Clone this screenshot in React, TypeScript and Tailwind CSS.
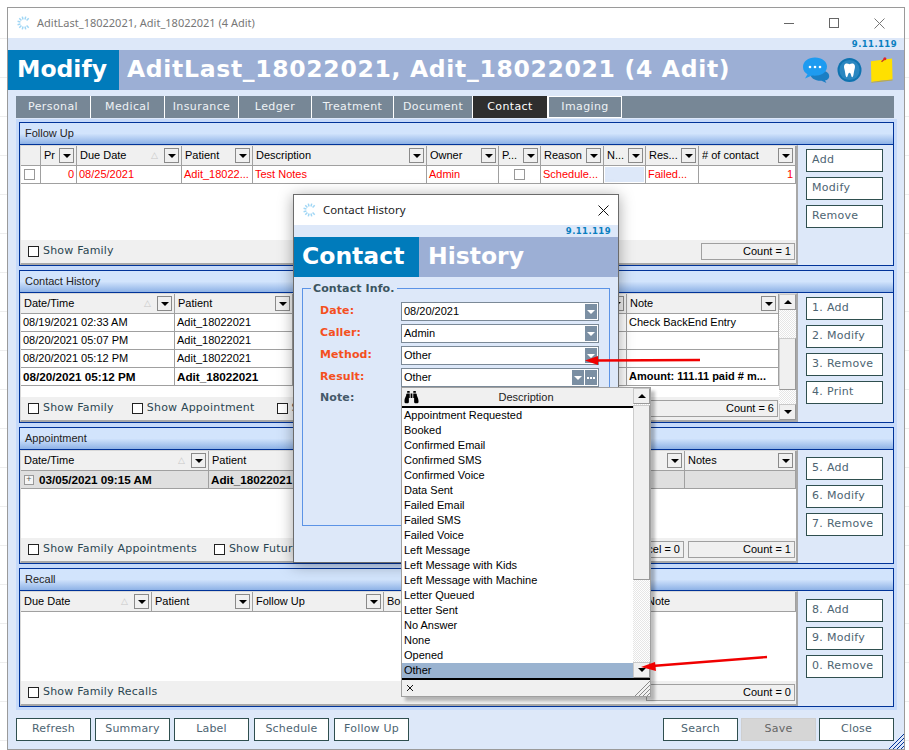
import { FaBinoculars } from "react-icons/fa";

const sans = "font-['Liberation_Sans',Arial,sans-serif]";
const deja = "font-['DejaVu_Sans',Verdana,sans-serif]";

interface Col {
  label: string;
  w: number;
  sort?: boolean;
  filter?: boolean;
}

function Spinner() {
  return (
    <svg width="14" height="14" viewBox="0 0 16 16" className="shrink-0">
      {Array.from({ length: 10 }).map((_, i) => {
        const a = (i * 30 + 45) * (Math.PI / 180);
        return (
          <line
            key={i}
            x1={8 + Math.cos(a) * 4.2}
            y1={8 + Math.sin(a) * 4.2}
            x2={8 + Math.cos(a) * 7.6}
            y2={8 + Math.sin(a) * 7.6}
            stroke="#a0d6f5"
            strokeWidth="1.7"
          />
        );
      })}
    </svg>
  );
}

function FilterBtn() {
  return (
    <span className="w-[15px] h-[15px] border border-[#8a8a8a] bg-[#f0f0f0] flex items-center justify-center shrink-0">
      <span className="w-0 h-0 border-x-[4px] border-x-transparent border-t-[4px] border-t-black" />
    </span>
  );
}

function HeaderCell({ col, h = 19 }: { col: Col; h?: number }) {
  return (
    <div
      style={{ width: col.w, height: h }}
      className="shrink-0 flex items-center pl-[3px] pr-[2px] border-r border-[#a0a0a0] overflow-hidden"
    >
      <span className="flex-1 whitespace-nowrap overflow-hidden">{col.label}</span>
      {col.sort && <span className="text-[9px] text-[#c8c8c8] mr-[6px]">△</span>}
      {col.filter !== false && <FilterBtn />}
    </div>
  );
}

function GridHeader({ cols }: { cols: Col[] }) {
  return (
    <div className="flex bg-[#f0f0f0] border-b border-[#a0a0a0] text-[11px] text-black shrink-0">
      {cols.map((c, i) => (
        <HeaderCell key={i} col={c} />
      ))}
    </div>
  );
}

function Cell({ w, children, right, bold }: { w: number; children?: React.ReactNode; right?: boolean; bold?: boolean }) {
  return (
    <div
      style={{ width: w }}
      className={`shrink-0 h-full flex items-center px-[2px] border-r border-[#a0a0a0] whitespace-nowrap overflow-hidden ${right ? "justify-end" : ""} ${bold ? "font-bold text-[11.7px]" : ""}`}
    >
      {children}
    </div>
  );
}

function Check({ label, className = "" }: { label: string; className?: string }) {
  return (
    <span className={`flex items-center gap-[4px] whitespace-nowrap ${deja} text-[11px] tracking-[0.2px] text-[#2b4652] ${className}`}>
      <span className="w-[11px] h-[11px] border border-[#222] bg-white shrink-0" />
      {label}
    </span>
  );
}

function CountBox({ text, w }: { text: string; w: number }) {
  return (
    <span
      style={{ width: w }}
      className={`h-[17px] border border-[#a0a0a0] bg-[#f0f0f0] flex items-center justify-end pr-[3px] text-[11px] text-black shrink-0 whitespace-nowrap overflow-hidden ${sans}`}
    >
      {text}
    </span>
  );
}

function SideBtn({ label }: { label: string }) {
  return (
    <button className={`w-[77px] h-[23px] border border-[#2f4f4f] bg-white text-left pl-[5px] ${deja} text-[11px] tracking-[0.3px] text-[#4d6472]`}>
      {label}
    </button>
  );
}

function Panel({
  title,
  height,
  buttons,
  btnTop,
  children,
}: {
  title: string;
  height: number;
  buttons: string[];
  btnTop: number;
  children: React.ReactNode;
}) {
  return (
    <section style={{ height }} className="border border-[#003399] bg-[#dde8f9] flex flex-col shrink-0">
      <div className={`h-[22px] shrink-0 border-b border-[#003399] bg-gradient-to-b from-[#d2e4fc] from-50% to-[#8eb2e6] flex items-center pl-[5px] text-[11px] text-[#222] ${sans}`}>
        {title}
      </div>
      <div className="flex-1 flex min-h-0">
        <div className={`w-[778px] flex flex-col bg-white border-t border-l border-[#d8d8d8] border-r-2 border-b-2 border-r-[#a8a8a8] border-b-[#a8a8a8] relative ${sans} text-[11px]`}>
          {children}
        </div>
        <div className="flex flex-col gap-[5px] pl-[8px]" style={{ paddingTop: btnTop }}>
          {buttons.map((b) => (
            <SideBtn key={b} label={b} />
          ))}
        </div>
      </div>
    </section>
  );
}

function GridFooter({ h = 23, children }: { h?: number; children: React.ReactNode }) {
  return (
    <div style={{ height: h }} className="shrink-0 bg-[#f0f0f0] flex items-center pl-[7px] pr-[1px]">
      {children}
    </div>
  );
}

function FollowUp() {
  const cols: Col[] = [
    { label: "", w: 20, filter: false },
    { label: "Pr", w: 36 },
    { label: "Due Date", w: 105, sort: true },
    { label: "Patient", w: 71 },
    { label: "Description", w: 174 },
    { label: "Owner", w: 72 },
    { label: "P...", w: 42 },
    { label: "Reason", w: 63 },
    { label: "N...", w: 42 },
    { label: "Res...", w: 53 },
    { label: "# of contact", w: 97 },
  ];
  return (
    <Panel title="Follow Up" height={144} buttons={["Add", "Modify", "Remove"]} btnTop={4}>
      <GridHeader cols={cols} />
      <div className="h-[18px] flex border-b border-[#a0a0a0] text-[#ff0000] shrink-0">
        <Cell w={20}>
          <span className="w-[11px] h-[11px] border border-[#999] bg-white ml-[1px]" />
        </Cell>
        <Cell w={36} right>0</Cell>
        <Cell w={105}>08/25/2021</Cell>
        <Cell w={71}>Adit_18022...</Cell>
        <Cell w={174}>Test Notes</Cell>
        <Cell w={72}>Admin</Cell>
        <div className="w-[42px] h-full flex items-center justify-center border-r border-[#a0a0a0]">
          <span className="w-[11px] h-[11px] border border-[#999] bg-white" />
        </div>
        <Cell w={63}>Schedule...</Cell>
        <div className="w-[42px] h-full border-r border-[#a0a0a0] p-[1px]">
          <div className="h-[15px] bg-[#dde8f9]" />
        </div>
        <Cell w={53}>Failed...</Cell>
        <Cell w={97} right>1</Cell>
      </div>
      <div className="flex-1" />
      <GridFooter>
        <Check label="Show Family" />
        <span className="flex-1" />
        <CountBox text="Count = 1" w={94} />
      </GridFooter>
    </Panel>
  );
}

const chCols: Col[] = [
  { label: "Date/Time", w: 154, sort: true },
  { label: "Patient", w: 118 },
  { label: "", w: 110 },
  { label: "", w: 110 },
  { label: "", w: 114 },
  { label: "Note", w: 152 },
];

function ChRow({ date, note, bold }: { date: string; note: React.ReactNode; bold?: boolean }) {
  return (
    <div className="h-[18px] flex border-b border-[#a0a0a0] text-black shrink-0">
      <Cell w={154} bold={bold}>{date}</Cell>
      <Cell w={118} bold={bold}>Adit_18022021</Cell>
      <Cell w={110} />
      <Cell w={110} />
      <Cell w={114} />
      <Cell w={152} bold={bold}>{note}</Cell>
    </div>
  );
}

function ScrollBtn({ up }: { up?: boolean }) {
  return (
    <div className="h-[16px] bg-[#f0f0f0] border border-[#c8c8c8] border-r-[#999] border-b-[#999] flex items-center justify-center shrink-0">
      <span className={`w-0 h-0 border-x-[4px] border-x-transparent ${up ? "border-b-[4px] border-b-black" : "border-t-[4px] border-t-black"}`} />
    </div>
  );
}

const trackDots = "bg-[repeating-conic-gradient(#e6e6e6_0%_25%,#ffffff_0%_50%)] bg-[length:2px_2px]";

function ContactHistory() {
  return (
    <Panel title="Contact History" height={153} buttons={["1. Add", "2. Modify", "3. Remove", "4. Print"]} btnTop={4}>
      <div className="flex flex-1 min-h-0">
        <div className="w-[758px] flex flex-col">
          <GridHeader cols={chCols} />
          <ChRow date="08/19/2021 02:33 AM" note="Check BackEnd Entry" />
          <ChRow date="08/20/2021 05:07 PM" note="" />
          <ChRow date="08/20/2021 05:12 PM" note="" />
          <ChRow date="08/20/2021 05:12 PM" note={<span className="text-[11px]">Amount: 111.11 paid # m...</span>} bold />
          <div className="flex-1" />
          <GridFooter>
            <Check label="Show Family" className="mr-[18px]" />
            <Check label="Show Appointment" className="mr-[22px]" />
            <Check label="Show Future" />
            <span className="flex-1" />
            <CountBox text="Count = 6" w={160} />
          </GridFooter>
        </div>
        <div className={`flex-1 flex flex-col ${trackDots}`}>
          <ScrollBtn up />
          <div className="h-[28px]" />
          <div className="h-[52px] bg-[#f0f0f0] border border-[#ccc] border-b-[#999] border-r-[#999]" />
          <div className="flex-1" />
          <ScrollBtn />
        </div>
      </div>
    </Panel>
  );
}

function Appointment() {
  const cols: Col[] = [
    { label: "Date/Time", w: 188, sort: true },
    { label: "Patient", w: 120 },
    { label: "", w: 120 },
    { label: "", w: 120 },
    { label: "", w: 116 },
    { label: "Notes", w: 111 },
  ];
  return (
    <Panel title="Appointment" height={137} buttons={["5. Add", "6. Modify", "7. Remove"]} btnTop={7}>
      <GridHeader cols={cols} />
      <div className="h-[18px] flex border-b border-[#a0a0a0] bg-[#dfdfdf] text-black shrink-0">
        <Cell w={188} bold>
          <span className="w-[10px] h-[10px] border border-[#999] bg-[#f5f5f5] mr-[5px] ml-[1px] flex items-center justify-center text-[9px] leading-none font-normal text-[#555] shrink-0">+</span>
          03/05/2021 09:15 AM
        </Cell>
        <Cell w={120} bold>Adit_18022021</Cell>
        <Cell w={120} />
        <Cell w={120} />
        <Cell w={116} />
        <Cell w={111} />
      </div>
      <div className="flex-1" />
      <GridFooter>
        <Check label="Show Family Appointments" className="mr-[17px]" />
        <Check label="Show Future" />
        <span className="flex-1" />
        <CountBox text="Cancel = 0" w={66} />
        <span className="w-[4px]" />
        <CountBox text="Count = 1" w={107} />
      </GridFooter>
    </Panel>
  );
}

function Recall() {
  const cols: Col[] = [
    { label: "Due Date", w: 131, sort: true },
    { label: "Patient", w: 101 },
    { label: "Follow Up", w: 131 },
    { label: "Booked", w: 130 },
    { label: "", w: 130 },
    { label: "Note", w: 152, filter: false },
  ];
  return (
    <Panel title="Recall" height={139} buttons={["8. Add", "9. Modify", "0. Remove"]} btnTop={8}>
      <GridHeader cols={cols} />
      <div className="flex-1" />
      <GridFooter>
        <Check label="Show Family Recalls" />
        <span className="flex-1" />
        <CountBox text="Count = 0" w={149} />
      </GridFooter>
    </Panel>
  );
}

function FootBtn({ label, disabled, className = "" }: { label: string; disabled?: boolean; className?: string }) {
  return (
    <button
      className={`w-[75px] h-[23px] border ${disabled ? "border-[#cfcfcf] bg-[#d6d6d6] text-[#666]" : "border-[#2f4f4f] bg-white text-[#4d6472]"} ${deja} text-[11px] tracking-[0.2px] ${className}`}
    >
      {label}
    </button>
  );
}

function Field({ value, more }: { value: string; more?: boolean }) {
  return (
    <div className={`h-[19px] w-[198px] border border-[#7b8997] bg-white flex items-center pl-[2px] pr-[1px] ${sans} text-[11px] text-black`}>
      <span className="flex-1">{value}</span>
      <span className="w-[12px] h-[15px] bg-[#7b8fa3] flex items-center justify-center">
        <span className="w-0 h-0 border-x-[4px] border-x-transparent border-t-[4px] border-t-white" />
      </span>
      {more && (
        <span className="w-[12px] h-[15px] bg-[#7b8fa3] ml-[1px] flex items-center justify-center gap-[1px]">
          <span className="w-[2px] h-[2px] bg-white" />
          <span className="w-[2px] h-[2px] bg-white" />
          <span className="w-[2px] h-[2px] bg-white" />
        </span>
      )}
    </div>
  );
}

const methods = [
  "Appointment Requested",
  "Booked",
  "Confirmed Email",
  "Confirmed SMS",
  "Confirmed Voice",
  "Data Sent",
  "Failed Email",
  "Failed SMS",
  "Failed Voice",
  "Left Message",
  "Left Message with Kids",
  "Left Message with Machine",
  "Letter Queued",
  "Letter Sent",
  "No Answer",
  "None",
  "Opened",
  "Other",
];

function ContactDialog() {
  const rows = [
    { label: "Date:", value: "08/20/2021" },
    { label: "Caller:", value: "Admin" },
    { label: "Method:", value: "Other" },
    { label: "Result:", value: "Other", more: true },
  ];
  return (
    <div className="absolute left-[293px] top-[194px] w-[326px] h-[369px] border border-[#6b6b6b] bg-[#dde8f9] flex flex-col shadow-[0_2px_14px_rgba(0,0,0,0.35)]">
      <div className="h-[30px] bg-white flex items-center pl-[9px] pr-[9px] gap-[6px] shrink-0">
        <Spinner />
        <span className="flex-1 font-['Noto_Sans',sans-serif] text-[11.4px] text-[#222]">Contact History</span>
        <svg width="11" height="11" viewBox="0 0 11 11" stroke="#111" strokeWidth="1">
          <path d="M0.5 0.5l10 10M10.5 0.5l-10 10" />
        </svg>
      </div>
      <div className={`h-[12px] shrink-0 text-right pr-[7px] ${deja} text-[8.5px] leading-[12px] font-bold tracking-[0.4px] text-[#0a7fc0]`}>9.11.119</div>
      <div className={`h-[40px] shrink-0 flex ${deja} font-bold text-[23.5px] text-white`}>
        <div className="w-[125px] bg-[#007bbb] flex items-center pl-[8px]">Contact</div>
        <div className="flex-1 bg-[#9cafd5] flex items-center pl-[9px]">History</div>
      </div>
      <div className="relative mx-[8px] mt-[11px] h-[238px] border border-[#5b93e6] pl-[17px] pt-[13px] flex flex-col">
        <span className={`absolute left-[8px] -top-[8px] px-[2px] bg-[#dde8f9] ${deja} font-bold text-[11px] tracking-[0.1px] text-[#3b5560]`}>
          Contact Info.
        </span>
        <div className="flex flex-col gap-[3px]">
          {rows.map((r) => (
            <div key={r.label} className="flex items-center">
              <span className={`w-[81px] ${deja} font-bold text-[11px] tracking-[0.1px] text-[#f4501e]`}>{r.label}</span>
              <Field value={r.value} more={r.more} />
            </div>
          ))}
        </div>
        <span className={`mt-[3px] ${deja} font-bold text-[11px] tracking-[0.1px] text-[#44596a]`}>Note:</span>
      </div>
    </div>
  );
}

function MethodDropdown() {
  return (
    <div className={`absolute left-[401px] top-[387px] w-[250px] h-[310px] border border-[#a0a0a0] bg-[#f0f0f0] flex flex-col shadow-[4px_4px_3px_rgba(0,0,0,0.25)] ${sans} text-[11px] text-black`}>
      <div className="flex flex-1 min-h-0">
        <div className="flex-1 flex flex-col min-w-0">
          <div className="h-[20px] flex items-center border-b-2 border-black pl-[2px] shrink-0">
            <FaBinoculars className="w-[15px] h-[14px] text-black shrink-0" />
            <span className="flex-1 text-center text-[#222]">Description</span>
          </div>
          <div className="flex-1 bg-white">
            {methods.map((m) => (
              <div key={m} className={`h-[15px] leading-[15px] pl-[2px] ${m === "Other" ? "bg-[#9ab3d0]" : ""}`}>
                {m}
              </div>
            ))}
          </div>
        </div>
        <div className={`w-[17px] flex flex-col shrink-0 ${trackDots}`}>
          <ScrollBtn up />
          <div className="h-[175px] mt-[1px] bg-[#f0f0f0] border border-[#ccc] border-b-[#999] border-r-[#999]" />
          <div className="flex-1" />
          <ScrollBtn />
        </div>
      </div>
      <div className="h-[18px] border-t-2 border-black flex items-center justify-between pl-[4px] shrink-0 bg-[#f0f0f0]">
        <svg width="8" height="8" viewBox="0 0 8 8" stroke="#111" strokeWidth="1">
          <path d="M1 1l6 6M7 1l-6 6" />
        </svg>
        <Grip color="#8a8a8a" />
      </div>
    </div>
  );
}

function Grip({ color }: { color: string }) {
  return (
    <svg width="16" height="16" viewBox="0 0 16 16" stroke={color} strokeWidth="1">
      <path d="M16 1L1 16M16 5L5 16M16 9L9 16M16 13L13 16" />
    </svg>
  );
}

function HeaderIcons() {
  return (
    <div className="flex items-center gap-[7px] pr-[10px]">
      <svg width="28" height="28" viewBox="0 0 28 28">
        <path d="M8 17 C14 13 22 13 26 17 C28.5 20 27 24 23 24.5 L24.5 27 L19.5 24.8 C13 25 8 22 8 17Z" fill="#1a7ec4" />
        <path d="M13 1.5 C6 1.5 1 5.5 1 11 C1 14.5 3 17 5.5 18.3 L3 22.5 L10 19.6 C17 20.5 25 17.5 25 10.5 C25 5.5 20 1.5 13 1.5Z" fill="#1e9bf0" />
        <circle cx="8" cy="11" r="1.3" fill="#fff" />
        <circle cx="13" cy="11" r="1.3" fill="#fff" />
        <circle cx="18" cy="11" r="1.3" fill="#fff" />
      </svg>
      <svg width="25" height="26" viewBox="0 0 26 26">
        <circle cx="13" cy="13" r="12.5" fill="#0f73b0" />
        <circle cx="13" cy="13" r="10.5" fill="#2a86c0" />
        <path d="M8.8 6.5 C10.5 5.8 11.8 6.6 13 6.9 C14.2 6.6 15.5 5.8 17.2 6.5 C19 7.3 19 10.2 18.2 12.5 C17.4 15 17.3 20.5 15.8 20.5 C14.6 20.5 14.8 15.8 13 15.8 C11.2 15.8 11.4 20.5 10.2 20.5 C8.7 20.5 8.6 15 7.8 12.5 C7 10.2 7 7.3 8.8 6.5Z" fill="#fff" />
      </svg>
      <svg width="25" height="28" viewBox="0 0 26 28">
        <path d="M2 5 L24 2 L24.5 24 C18 24.5 9 25.5 2.5 26.5Z" fill="#ffe000" />
        <path d="M2.5 26.5 C9 25.5 18 24.5 24.5 24 L24.5 24.8 C18 25.5 9 26.5 2.5 27.2Z" fill="#b9a94a" />
        <path d="M13 5.5 L16 2.8" stroke="#c0392b" strokeWidth="1.5" />
        <circle cx="16.5" cy="2.3" r="1.6" fill="#e0242a" />
      </svg>
    </div>
  );
}

function RedArrows() {
  // annotations someone drew over the screenshot
  return (
    <svg className="absolute inset-0 pointer-events-none" width="909" height="750" viewBox="0 0 909 750">
      <path d="M700 360 L595 360.5" stroke="#f00000" strokeWidth="2.6" fill="none" />
      <path d="M585 360.5 L598 356 L598 365Z" fill="#f00000" />
      <path d="M767 657 L652 666" stroke="#f00000" strokeWidth="2.4" fill="none" />
      <path d="M641 667 L655 662 L656 671Z" fill="#f00000" />
    </svg>
  );
}

export default function App() {
  const tabs = [
    { label: "Personal", w: 75 },
    { label: "Medical", w: 74 },
    { label: "Insurance", w: 74 },
    { label: "Ledger", w: 73 },
    { label: "Treatment", w: 82 },
    { label: "Document", w: 79 },
    { label: "Contact", w: 75, active: true },
    { label: "Imaging", w: 74 },
  ];
  return (
    <div className="relative w-[909px] h-[750px] overflow-hidden bg-white bg-[repeating-linear-gradient(180deg,#ffffff_0px,#ffffff_38px,#dcdcdc_39px)]">
      <div className="absolute left-[7px] top-[7px] w-[898px] h-[743px] border border-[#9a9a9a] bg-[#dde8f9] flex flex-col">
        {/* title bar */}
        <div className="h-[30px] bg-white flex items-center pl-[9px] gap-[6px] shrink-0">
          <Spinner />
          <span className="flex-1 font-['Noto_Sans',sans-serif] text-[11px] text-[#777]">AditLast_18022021, Adit_18022021 (4 Adit)</span>
          <span className="w-[10px] h-[1px] bg-[#666] mr-[29px]" />
          <span className="w-[10px] h-[10px] border border-[#666] mr-[29px]" />
          <svg width="11" height="11" viewBox="0 0 11 11" stroke="#777" strokeWidth="1" className="mr-[19px]">
            <path d="M0.5 0.5l10 10M10.5 0.5l-10 10" />
          </svg>
        </div>
        <div className={`h-[12px] shrink-0 text-right pr-[7px] ${deja} text-[8.5px] leading-[12px] font-bold tracking-[0.4px] text-[#0a7fc0]`}>9.11.119</div>
        {/* page heading */}
        <div className={`h-[40px] shrink-0 flex ${deja} font-bold text-[23.5px] text-white`}>
          <div className="w-[111px] bg-[#007bbb] flex items-center pl-[9px]">Modify</div>
          <div className="flex-1 bg-[#9cafd5] flex items-center pl-[8px]">
            <span className="flex-1 tracking-[0.68px]">AditLast_18022021, Adit_18022021 (4 Adit)</span>
            <HeaderIcons />
          </div>
        </div>
        {/* tabs */}
        <div className="h-[22px] mt-[6px] ml-[8px] w-[878px] bg-[#778796] flex shrink-0">
          {tabs.map((t) => (
            <div
              key={t.label}
              style={{ width: t.w }}
              className={`h-full shrink-0 flex items-center justify-center border-r border-white ${deja} text-[11px] tracking-[0.4px] ${t.active ? "bg-[#2e2e2e] text-white" : "bg-[#778796] text-[#eef2f5]"} ${t.label === "Imaging" ? "border border-white" : ""}`}
            >
              {t.label}
            </div>
          ))}
        </div>
        {/* panels */}
        <div className="mt-[1px] ml-[8px] w-[881px] h-[591px] bg-[#c6dafa] px-[3px] pt-[3px] flex flex-col gap-[4px] shrink-0">
          <FollowUp />
          <ContactHistory />
          <Appointment />
          <Recall />
        </div>
        {/* bottom buttons */}
        <div className="mt-[8px] ml-[8px] w-[878px] flex shrink-0 relative">
          <div className="flex gap-[4px]">
            <FootBtn label="Refresh" />
            <FootBtn label="Summary" />
            <FootBtn label="Label" />
            <FootBtn label="Schedule" className="ml-[1px]" />
            <FootBtn label="Follow Up" className="ml-[1px]" />
          </div>
          <span className="flex-1" />
          <div className="flex gap-[3px]">
            <FootBtn label="Search" />
            <FootBtn label="Save" disabled />
            <FootBtn label="Close" />
          </div>
        </div>
        <div className="absolute right-0 bottom-0">
          <Grip color="#003399" />
        </div>
      </div>
      <ContactDialog />
      <MethodDropdown />
      <RedArrows />
    </div>
  );
}
